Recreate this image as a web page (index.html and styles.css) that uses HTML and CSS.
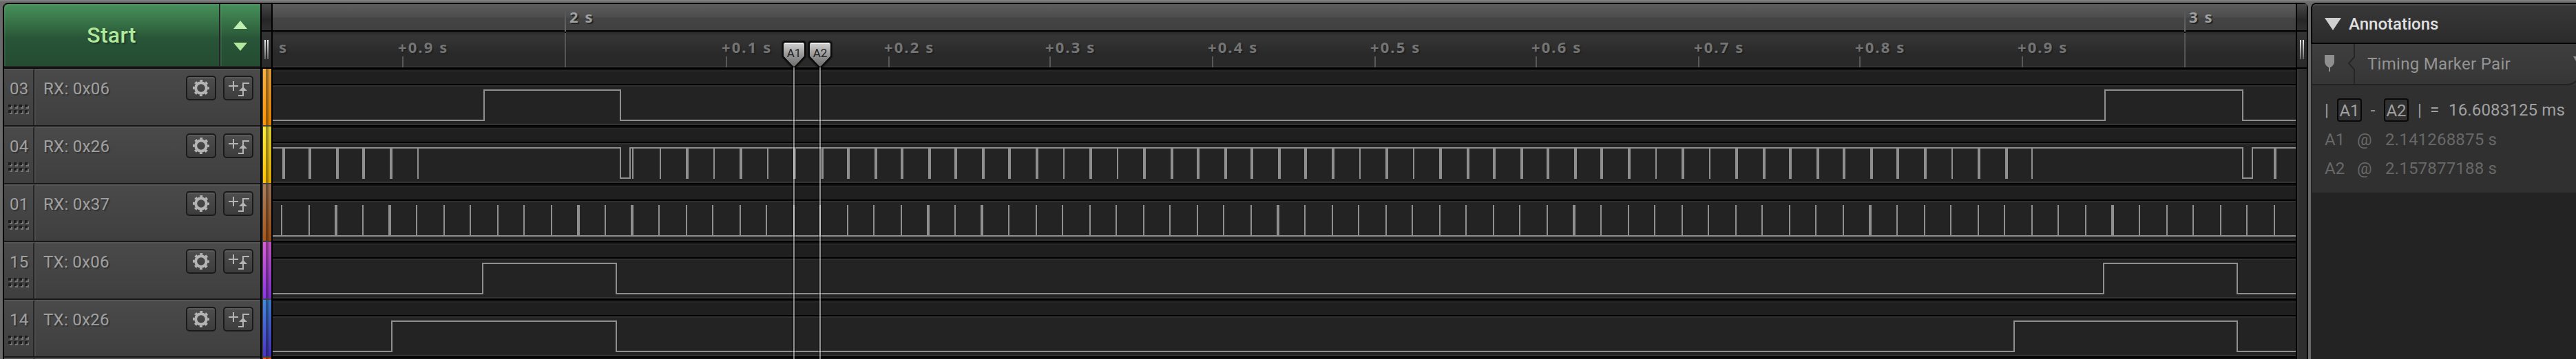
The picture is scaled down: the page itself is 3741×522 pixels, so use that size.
FILE: index.html
```html
<!DOCTYPE html>
<html lang="en">
<head>
  <meta charset="UTF-8" />
  <title>Logic</title>
  <link rel="stylesheet" href="styles.css">
</head>
<body>
  <div class="app">
    <div class="analyzer">
      <div class="sidebar">
        <div class="start-bar">
          <button class="start-btn">Start</button>
          <button class="spin-btn">
            <svg width="20" height="44" viewBox="0 0 20 44"><path d="M10 0L20 12H0z" fill="#bfeeb0"/><path d="M10 44L20 32H0z" fill="#b0e89c"/></svg>
          </button>
        </div>
        <div id="channels"></div>
      </div>

      <div class="strip">
        <div class="strip-top"></div>
        <div class="strip-grip"><i></i><i></i></div>
        <div id="colors"></div>
      </div>

      <div class="graph">
        <div class="seconds"></div>
        <div class="tenths"></div>
        <div id="waves"></div>
        <div class="overlay" id="ticks"><span class="unit">s</span></div>
        <div class="marker" style="left: 737px"><svg width="42" height="46" viewBox="0 0 42 46"><use href="#flag"/></svg><span>A1</span></div>
        <div class="marker" style="left: 775px"><svg width="42" height="46" viewBox="0 0 42 46"><use href="#flag"/></svg><span>A2</span></div>
      </div>

      <div class="strip right">
        <div class="strip-top"></div>
        <div class="strip-grip"><i></i><i></i></div>
      </div>
    </div>

    <div class="panel">
      <div class="panel-title">
        <svg width="24" height="18" viewBox="0 0 24 18"><path d="M0 0H24L12 18z" fill="#d0d0d0"/></svg>
        <span>Annotations</span>
      </div>
      <div class="pair">
        <svg class="pair-shape" width="383" height="60" viewBox="0 0 383 60">
          <path d="M61 0V19L53 28L61 37V58" fill="none" stroke="#262626" stroke-width="2"/>
          <path d="M0 59H370Q378 59 383 54" fill="none" stroke="#222" stroke-width="2"/>
          <path d="M18 16H32V26Q31 32 26 34V40H24V34Q19 32 18 26z" fill="#8f8f8f"/>
          <path d="M379 18H383V25z" fill="#8f8f8f"/>
        </svg>
        <span>Timing Marker Pair</span>
      </div>
      <div class="measure">
        <div class="diff"><span class="bar">|</span><b>A1</b><span class="minus">-</span><b>A2</b><span class="bar">|</span><span class="eq">=</span><span>16.6083125 ms</span></div>
        <div class="point"><span>A1</span><span>@</span><span>2.141268875 s</span></div>
        <div class="point"><span>A2</span><span>@</span><span>2.157877188 s</span></div>
      </div>
    </div>
  </div>

  <svg class="defs" width="0" height="0">
    <defs>
      <linearGradient id="flagFill" x1="0" y1="0" x2="0" y2="1">
        <stop offset="0" stop-color="#d6d6d6"/>
        <stop offset="0.5" stop-color="#969696"/>
        <stop offset="1" stop-color="#686868"/>
      </linearGradient>
      <g id="flag">
        <path d="M8 4H34Q37 4 37 7V25L21 43L5 25V7Q5 4 8 4z" fill="none" stroke="#000" stroke-opacity="0.3" stroke-width="5"/>
        <path d="M8 4H34Q37 4 37 7V25L21 42L5 25V7Q5 4 8 4z" fill="url(#flagFill)" stroke="#0a0a0a" stroke-width="2"/>
        <path d="M8 6H34" stroke="#ececec" stroke-width="2"/>
      </g>
      <g id="gear" fill="none" stroke="#b4b4b4">
        <circle cx="22" cy="18" r="7.8" stroke-width="4"/>
        <circle cx="22" cy="18" r="10.6" stroke-width="2.8" stroke-dasharray="4 4.325" stroke-dashoffset="2"/>
      </g>
      <g id="edge">
        <path d="M8 15H22M15 8V22M22 29H29V11H38" fill="none" stroke="#b4b4b4" stroke-width="2"/>
        <path d="M29 16L35 22H23z" fill="#b4b4b4"/>
      </g>
      <g id="grip">
        <path d="M2 2h4v4h-4zM10 2h4v4h-4zM18 2h4v4h-4zM26 2h4v4h-4zM2 10h4v4h-4zM10 10h4v4h-4zM18 10h4v4h-4zM26 10h4v4h-4z" fill="#747474"/>
        <path d="M0 0h4v4h-4zM8 0h4v4h-4zM16 0h4v4h-4zM24 0h4v4h-4zM0 8h4v4h-4zM8 8h4v4h-4zM16 8h4v4h-4zM24 8h4v4h-4z" fill="#1e1e1e"/>
      </g>
    </defs>
  </svg>
  <script src="script.js"></script>
</body>
</html>
```
FILE: styles.css
```css
* {
  box-sizing: border-box;
}

body {
  margin: 0;
  background: #6a6a6a;
  font-family: Roboto, "Liberation Sans", sans-serif;
  color: #a0a0a0;
  overflow: hidden;
}

.app {
  display: flex;
  gap: 4px;
  height: 522px;
  padding: 2px 0 0 4px;
  border-top: 2px solid #808080;
}

.analyzer {
  display: flex;
  width: 3348px;
  height: 518px;
  background: #000;
  border-radius: 8px 8px 0 0;
  padding: 2px 2px 0 2px;
  overflow: hidden;
}

/* left side */
.sidebar {
  width: 372px;
  margin-right: 2px;
}

.start-bar {
  display: flex;
  gap: 2px;
  height: 94px;
  background: #262626;
  border-bottom: 2px solid #0a0a0a;
  padding-bottom: 2px;
}

.start-btn,
.spin-btn {
  border: none;
  padding: 0;
  color: #b0e89c;
  font-family: inherit;
  font-size: 32px;
  font-weight: 500;
  letter-spacing: 0.3px;
  text-shadow: 2px 2px 2px rgba(0, 0, 0, 0.35);
  background: linear-gradient(#48905c 0, #3b7a4c 22%, #2c5c3a 50%, #285438 56%, #244c30 100%);
  box-shadow: inset 2px 2px rgba(120, 190, 130, 0.15);
}

.start-btn {
  width: 312px;
  border-radius: 6px 0 0 0;
}

.spin-btn {
  flex: 1;
  padding-top: 10px;
}

.channel {
  display: flex;
  height: 84px;
  border-bottom: 2px solid #181818;
  background: linear-gradient(#4a4a4a, #3f3f3f);
  font-size: 24px;
  letter-spacing: 0.3px;
  text-shadow: 2px 2px 1px #333;
}

.num {
  width: 44px;
  border-right: 2px solid #252525;
  border-top: 2px solid #555;
  padding: 13px 0 0 8px;
  line-height: 28px;
}

.num svg {
  display: block;
  margin: 9px 0 0 -2px;
}

.name {
  flex: 1;
  display: flex;
  align-items: flex-start;
  gap: 10px;
  border-top: 2px solid #555;
  border-left: 2px solid #4c4c4c;
  padding: 8px 10px 0 11px;
}

.name span {
  flex: 1;
  line-height: 28px;
  padding-top: 5px;
}

.icon-btn {
  width: 44px;
  height: 36px;
  padding: 0;
  border: 2px solid #1a1a1a;
  border-radius: 5px;
  background: linear-gradient(#4e4e4e, #3c3c3c);
  box-shadow: inset 0 2px #5a5a5a;
}

.icon-btn svg {
  display: block;
  margin: -2px;
}

/* column between names and waves */
.strip {
  width: 14px;
  flex: none;
  background: #2e2e2e;
  box-shadow: inset 2px 0 #353535;
}

.strip-top {
  height: 40px;
  border-bottom: 2px solid #000;
  background: linear-gradient(#474747, #262626 60%, #303030);
}

.strip-grip {
  display: flex;
  gap: 2px;
  justify-content: center;
  height: 54px;
  padding-top: 12px;
  border-bottom: 2px solid #000;
  background: linear-gradient(#333, #292929);
}

.strip-grip i {
  width: 2px;
  height: 28px;
  background: linear-gradient(#f0f0f0, #666);
}

.color {
  height: 84px;
  margin-left: 2px;
  border-bottom: 2px solid #444;
}

.color::before {
  content: "";
  display: block;
  height: 100%;
  background: linear-gradient(90deg, transparent 4px, rgba(0, 0, 0, 0.42) 4px, rgba(0, 0, 0, 0.35) 8px, rgba(0, 0, 0, 0.14) 8px);
}

/* graph */
.graph {
  position: relative;
  width: 2938px;
  margin: 0 2px;
  flex: none;
}

.seconds {
  height: 40px;
  background: linear-gradient(#5e5e5e, #4c4c4c 50%, #444 54%, #404040);
  border-bottom: 2px solid #000;
}

.tenths {
  height: 54px;
  border-bottom: 2px solid #000;
  box-shadow: inset 0 -2px #333;
  background: linear-gradient(#282828, #353535 6px, #2f2f2f 40%, #292929 62%, #292929);
}

.wave {
  height: 84px;
  background: linear-gradient(#0e0e0e 2px, #262626 2px 4px, #1f1f1f 4px 22px, #000 22px 24px, #303030 24px 26px, #232323 26px 80px, #333 80px 82px, #000 82px);
}

.wave svg {
  display: block;
  fill: #8f8f8f;
}

.overlay {
  position: absolute;
  inset: 0;
  overflow: hidden;
  font-family: "Noto Sans", sans-serif;
  font-weight: 700;
  font-size: 22px;
  line-height: 24px;
  letter-spacing: 2.1px;
  white-space: pre;
  text-shadow: 2px 2px 1px #222;
}

.tick {
  position: absolute;
  top: 76px;
  width: 2px;
  height: 16px;
  background: #585858;
}

.tick span {
  position: absolute;
  left: -6px;
  top: -26px;
  color: #747474;
}

.unit {
  position: absolute;
  left: 9px;
  top: 50px;
  color: #747474;
}

.tick.second {
  top: 10px;
  height: 82px;
  background: linear-gradient(#555, #666 30px, #000 30px 32px, #555 32px);
}

.tick.second span {
  left: 7px;
  top: -4px;
  color: #a0a0a0;
}

.marker {
  position: absolute;
  top: 51px;
  width: 42px;
  height: 466px;
  text-align: center;
}

.marker::after {
  content: "";
  position: absolute;
  top: 41px;
  bottom: 0;
  left: 19px;
  width: 2px;
  background: rgba(255, 255, 255, 0.5);
  box-shadow: 0 0 0 2px rgba(0, 0, 0, 0.25);
}

.marker svg {
  position: absolute;
  left: -1px;
  top: 0;
}

.marker span {
  position: absolute;
  left: -1px;
  width: 42px;
  top: 11px;
  font-size: 17px;
  line-height: 18px;
  color: #222;
}

/* annotations */
.panel {
  flex: 1;
  height: 518px;
  border-top: 2px solid #000;
  border-radius: 8px 0 0 0;
  background: #232323;
  font-size: 24px;
  overflow: hidden;
}

.panel-title {
  display: flex;
  align-items: center;
  gap: 11px;
  height: 58px;
  padding: 2px 0 0 18px;
  border-left: 2px solid #000;
  border-bottom: 2px solid #000;
  border-radius: 6px 0 0 0;
  box-shadow: inset 0 2px #4a4a4a;
  background: linear-gradient(#383838, #2b2b2b);
  color: #e0e0e0;
  font-weight: 500;
}

.pair {
  position: relative;
  height: 60px;
  padding: 15px 0 0 80px;
  border-left: 2px solid #232323;
  line-height: 28px;
  letter-spacing: 0.3px;
  color: #949494;
  background: linear-gradient(#3e3e3e, #363636);
}

.pair-shape {
  position: absolute;
  left: 0;
  top: 0;
}

.measure {
  padding: 17px 0 0 18px;
  height: 156px;
  border-left: 2px solid #232323;
  background: #303030;
}

.diff {
  display: flex;
  align-items: center;
  height: 38px;
  color: #a0a0a0;
}

.diff span:last-child {
  letter-spacing: 0.15px;
}

.diff b {
  width: 36px;
  height: 34px;
  border: 2px solid #080808;
  border-radius: 4px;
  font-weight: 400;
  line-height: 33px;
  text-align: center;
}

.diff .bar {
  width: 18px;
}

.diff .minus {
  width: 32px;
  text-align: center;
}

.diff b + .bar {
  margin-left: 13px;
}

.diff .eq {
  width: 27px;
}

.point {
  display: flex;
  height: 42px;
  line-height: 48px;
  letter-spacing: 0.2px;
  color: #686868;
}

.point span:first-child {
  width: 47px;
}

.point span:nth-child(2) {
  width: 41px;
}

.defs {
  position: absolute;
}
```
FILE: script.js
```javascript
const GRAPH_LEFT = 396;
const GRAPH_RIGHT = 3334;
const HIGH = 30;
const LOW = 74;

// edges: x of every level change, thin and wide: pulses of 2px and 4px
const channels = [
  { num: '03', name: 'RX: 0x06', colors: ['#f9b041', '#ff9400'], start: 0, edges: [702, 900, 3056, 3256] },
  {
    num: '04', name: 'RX: 0x26', colors: ['#faec3c', '#ffc000'], start: 1, edges: [900, 914, 3256, 3270],
    thin: [606, 918, 958, 1036, 1114, 1544, 1622, 1974, 2052, 2404, 2482, 2834, 2950],
    wide: [410, 448, 488, 526, 566, 996, 1074, 1152, 1192, 1230, 1270, 1308, 1348, 1386, 1426, 1464, 1504,
      1582, 1660, 1700, 1738, 1778, 1816, 1856, 1894, 1934, 2012, 2090, 2130, 2168, 2208, 2246, 2286, 2324,
      2364, 2442, 2520, 2560, 2598, 2638, 2676, 2716, 2754, 2794, 2872, 2912, 3302]
  },
  {
    num: '01', name: 'RX: 0x37', colors: ['#ac7e5c', '#aa5818'], start: 0, edges: [],
    thin: [408, 448, 526, 604, 644, 682, 722, 760, 800, 878, 956, 996, 1034, 1074, 1112, 1152, 1190, 1230,
      1268, 1308, 1386, 1464, 1504, 1542, 1582, 1620, 1660, 1698, 1738, 1776, 1816, 1894, 1934, 1972, 2012,
      2050, 2090, 2128, 2168, 2206, 2246, 2324, 2364, 2402, 2442, 2480, 2520, 2558, 2598, 2636, 2676, 2754,
      2794, 2832, 2872, 2910, 2950, 2988, 3028, 3106, 3146, 3184, 3224, 3262, 3302],
    wide: [486, 564, 838, 916, 1346, 1424, 1854, 2284, 2714, 3066]
  },
  { num: '15', name: 'TX: 0x06', colors: ['#da5cd8', '#8c36e4'], start: 0, edges: [700, 894, 3054, 3248] },
  { num: '14', name: 'TX: 0x26', colors: ['#418ae0', '#4c36ca'], start: 0, edges: [568, 894, 2924, 3248] },
  { num: '', name: '', colors: ['#f4561c', '#f4561c'], start: 0, edges: [] }
];

function rect(x, y, w, h) {
  return `<rect x="${x - GRAPH_LEFT}" y="${y}" width="${w}" height="${h}"/>`;
}

function drawWave(ch) {
  let out = '';
  let level = ch.start;
  let x = GRAPH_LEFT;
  ch.edges.forEach(edge => {
    out += rect(x, level ? HIGH : LOW, edge + 2 - x, 2);
    out += rect(edge, HIGH, 2, LOW - HIGH + 2);
    level = 1 - level;
    x = edge;
  });
  out += rect(x, level ? HIGH : LOW, GRAPH_RIGHT - x, 2);
  (ch.thin || []).forEach(p => out += rect(p, HIGH, 2, LOW - HIGH + 2));
  (ch.wide || []).forEach(p => out += rect(p, HIGH, 4, LOW - HIGH + 2));
  return `<svg width="2938" height="84" shape-rendering="crispEdges">${out}</svg>`;
}

channels.forEach(ch => {
  document.getElementById('channels').innerHTML += `
    <div class="channel">
      <div class="num">${ch.num}<svg width="34" height="16"><use href="#grip"/></svg></div>
      <div class="name">
        <span>${ch.name}</span>
        <button class="icon-btn"><svg width="44" height="36"><use href="#gear"/></svg></button>
        <button class="icon-btn"><svg width="44" height="36"><use href="#edge"/></svg></button>
      </div>
    </div>`;
  document.getElementById('colors').innerHTML +=
    `<div class="color" style="background: linear-gradient(${ch.colors[0]}, ${ch.colors[1]})"></div>`;
  document.getElementById('waves').innerHTML += `<div class="wave">${drawWave(ch)}</div>`;
});

const ticks = [
  [584, '+0.9 s'], [820, '2 s'], [1054, '+0.1 s'], [1290, '+0.2 s'], [1524, '+0.3 s'],
  [1760, '+0.4 s'], [1996, '+0.5 s'], [2230, '+0.6 s'], [2466, '+0.7 s'], [2700, '+0.8 s'],
  [2936, '+0.9 s'], [3172, '3 s']
];

ticks.forEach(([x, label]) => {
  const cls = label[0] === '+' ? 'tick' : 'tick second';
  document.getElementById('ticks').innerHTML +=
    `<div class="${cls}" style="left: ${x - GRAPH_LEFT}px"><span>${label}</span></div>`;
});
```
